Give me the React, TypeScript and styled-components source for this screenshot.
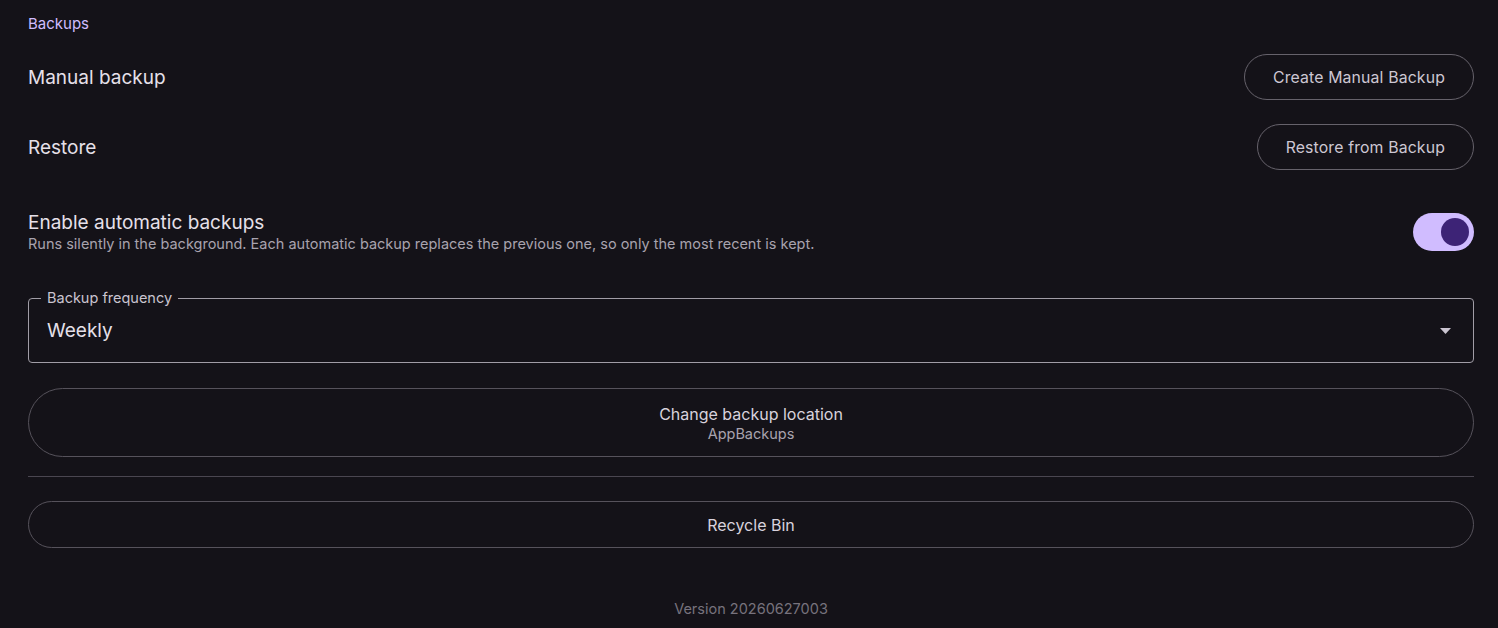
import React, { useState } from "react";
import styled, { createGlobalStyle } from "styled-components";

const GlobalStyle = createGlobalStyle`
    html, body {
        margin: 0;
        padding: 0;
        background: #141218;
    }
    body {
        font-family: Inter, "Noto Sans", sans-serif;
        color: #e6e0e9;
    }
`;

const Page = styled.div`
    display: flex;
    flex-direction: column;
    padding: 13px 24px 10px 28px;
    min-height: 628px;
    box-sizing: border-box;
`;

const SectionTitle = styled.div`
    font-size: 15px;
    line-height: 22px;
    color: #d0bcff;
`;

const Row = styled.div<{ $top: number }>`
    display: flex;
    align-items: center;
    justify-content: space-between;
    margin-top: ${(p) => p.$top}px;
`;

const RowLabel = styled.div`
    font-size: 19px;
    line-height: 24px;
    padding-top: 1px;
    color: #e6e0e9;
`;

const RowText = styled.div`
    display: flex;
    flex-direction: column;
`;

const RowHint = styled.div`
    font-size: 14.5px;
    line-height: 18px;
    color: #a8a3ae;
`;

const OutlinedButton = styled.button`
    height: 46px;
    padding: 0 28px;
    border: 1px solid #66626b;
    border-radius: 23px;
    background: transparent;
    color: #cdc7d3;
    font-family: inherit;
    font-size: 15.8px;
    letter-spacing: 0.15px;
    cursor: pointer;
`;

const WideButton = styled.button<{ $top: number; $height: number }>`
    display: flex;
    flex-direction: column;
    align-items: center;
    justify-content: center;
    width: 100%;
    margin-top: ${(p) => p.$top}px;
    height: ${(p) => p.$height}px;
    border: 1px solid #56525b;
    border-radius: ${(p) => p.$height / 2}px;
    background: transparent;
    color: #d8d2dd;
    font-family: inherit;
    font-size: 16px;
    cursor: pointer;
`;

const WideSub = styled.span`
    font-size: 14.5px;
    line-height: 18px;
    color: #a8a3ae;
`;

const WideMain = styled.span`
    line-height: 22px;
`;

const Track = styled.button<{ $on: boolean }>`
    position: relative;
    width: 61px;
    height: 38px;
    border-radius: 19px;
    border: none;
    padding: 0;
    background: ${(p) => (p.$on ? "#d0bcff" : "#36343b")};
    cursor: pointer;
`;

const Thumb = styled.span<{ $on: boolean }>`
    position: absolute;
    top: 5px;
    left: ${(p) => (p.$on ? 28 : 5)}px;
    width: 28px;
    height: 28px;
    border-radius: 50%;
    background: ${(p) => (p.$on ? "#3d2376" : "#938f99")};
`;

const Field = styled.div`
    position: relative;
    margin-top: 45px;
    padding: 0 22px 0 18px;
    height: 65px;
    box-sizing: border-box;
    border: 1px solid #a19da6;
    border-radius: 4px;
    display: flex;
    align-items: center;
    justify-content: space-between;
`;

const FieldLabel = styled.span`
    position: absolute;
    top: -11px;
    left: 12px;
    padding: 0 6px;
    background: #141218;
    font-size: 14.5px;
    line-height: 20px;
    color: #cac4d0;
`;

const FieldValue = styled.span`
    font-size: 19px;
    color: #e6e0e9;
`;

const Divider = styled.hr`
    margin: 19px 0 0;
    border: none;
    border-top: 1px solid #4a4650;
`;

const Version = styled.div`
    margin-top: 51px;
    text-align: center;
    font-size: 14.5px;
    line-height: 20px;
    color: #77727d;
`;

function Switch() {
    const [on, setOn] = useState(true);
    return (
        <Track $on={on} onClick={() => setOn(!on)} aria-pressed={on}>
            <Thumb $on={on} />
        </Track>
    );
}

export default function App() {
    return (
        <>
            <GlobalStyle />
            <Page>
                <SectionTitle>Backups</SectionTitle>
                <Row $top={19}>
                    <RowLabel>Manual backup</RowLabel>
                    <OutlinedButton>Create Manual Backup</OutlinedButton>
                </Row>
                <Row $top={24}>
                    <RowLabel>Restore</RowLabel>
                    <OutlinedButton>Restore from Backup</OutlinedButton>
                </Row>
                <Row $top={40}>
                    <RowText>
                        <RowLabel>Enable automatic backups</RowLabel>
                        <RowHint>
                            Runs silently in the background. Each automatic backup replaces the previous
                            one, so only the most recent is kept.
                        </RowHint>
                    </RowText>
                    <Switch />
                </Row>
                <Field>
                    <FieldLabel>Backup frequency</FieldLabel>
                    <FieldValue>Weekly</FieldValue>
                    <svg width="11" height="6" viewBox="0 0 11 6">
                        <path d="M0 0 L11 0 L5.5 6 Z" fill="#cac4d0" />
                    </svg>
                </Field>
                <WideButton $top={25} $height={69}>
                    <WideMain>Change backup location</WideMain>
                    <WideSub>AppBackups</WideSub>
                </WideButton>
                <Divider />
                <WideButton $top={24} $height={47}>
                    <WideMain>Recycle Bin</WideMain>
                </WideButton>
                <Version>Version 20260627003</Version>
            </Page>
        </>
    );
}
